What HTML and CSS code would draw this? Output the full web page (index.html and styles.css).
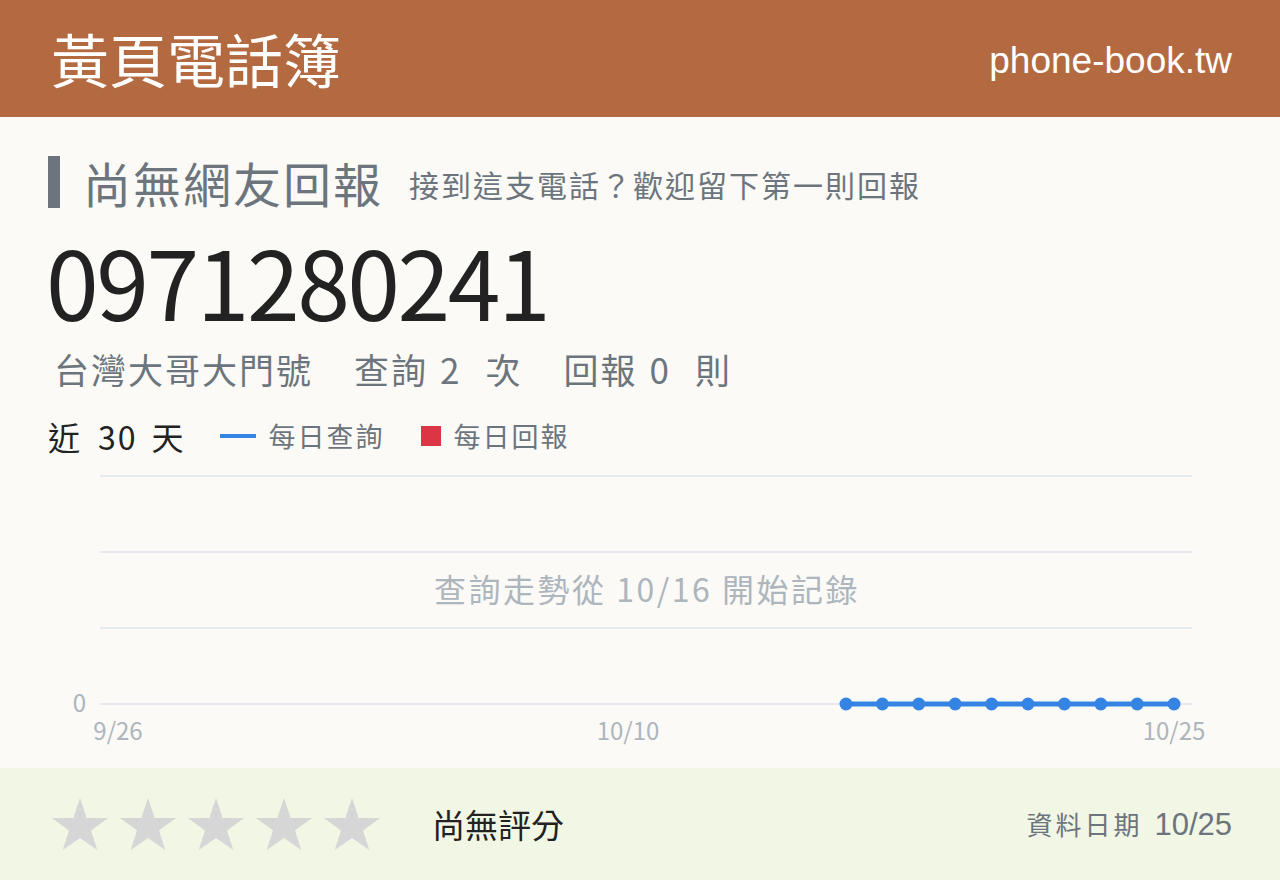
FILE: index.html
```html
<!DOCTYPE html>
<html lang="zh-Hant">
<head>
<meta charset="utf-8">
<title>0971280241 - 黃頁電話簿</title>
<link rel="stylesheet" href="styles.css">
</head>
<body>
<div class="page">
  <header class="topbar">
    <h1 class="brand">黃頁電話簿</h1>
    <span class="domain">phone-book.tw</span>
  </header>

  <main class="card">
    <div class="status">
      <span class="status-bar"></span>
      <h2 class="status-title">尚無網友回報</h2>
      <p class="status-hint">接到這支電話？歡迎留下第一則回報</p>
    </div>

    <div class="number">0971280241</div>

    <div class="meta">
      <span class="meta-item">台灣大哥大門號</span>
      <span class="meta-item">查詢<span class="count">2</span>次</span>
      <span class="meta-item">回報<span class="count">0</span>則</span>
    </div>

    <div class="legend">
      <span class="range">近<span class="days">30</span>天</span>
      <span class="key"><i class="swatch-line"></i>每日查詢</span>
      <span class="key"><i class="swatch-box"></i>每日回報</span>
    </div>

    <svg class="chart" viewBox="0 0 1184 290" width="1184" height="290">
      <g class="grid">
        <line x1="52" y1="11" x2="1144" y2="11"/>
        <line x1="52" y1="87" x2="1144" y2="87"/>
        <line x1="52" y1="163" x2="1144" y2="163"/>
        <line x1="52" y1="239" x2="1144" y2="239"/>
      </g>
      <text class="axis" x="38" y="247" text-anchor="end">0</text>
      <text class="axis" x="70" y="275" text-anchor="middle">9/26</text>
      <text class="axis" x="580" y="275" text-anchor="middle">10/10</text>
      <text class="axis" x="1126" y="275" text-anchor="middle">10/25</text>
      <text class="note" x="599" y="137" text-anchor="middle">查詢走勢從 10/16 開始記錄</text>
      <g class="series">
        <polyline points="798,239 1126,239"/>
        <circle cx="798" cy="239" r="6.5"/>
        <circle cx="834.4" cy="239" r="6.5"/>
        <circle cx="870.8" cy="239" r="6.5"/>
        <circle cx="907.2" cy="239" r="6.5"/>
        <circle cx="943.6" cy="239" r="6.5"/>
        <circle cx="980" cy="239" r="6.5"/>
        <circle cx="1016.4" cy="239" r="6.5"/>
        <circle cx="1052.8" cy="239" r="6.5"/>
        <circle cx="1089.2" cy="239" r="6.5"/>
        <circle cx="1126" cy="239" r="6.5"/>
      </g>
    </svg>
  </main>

  <footer class="rating">
    <div class="stars">
      <svg class="star" viewBox="0 0 56 52"><polygon points="28,0 34.6,20 56,20 39,32.5 45.3,52 28,40 10.7,52 17,32.5 0,20 21.4,20"/></svg>
      <svg class="star" viewBox="0 0 56 52"><polygon points="28,0 34.6,20 56,20 39,32.5 45.3,52 28,40 10.7,52 17,32.5 0,20 21.4,20"/></svg>
      <svg class="star" viewBox="0 0 56 52"><polygon points="28,0 34.6,20 56,20 39,32.5 45.3,52 28,40 10.7,52 17,32.5 0,20 21.4,20"/></svg>
      <svg class="star" viewBox="0 0 56 52"><polygon points="28,0 34.6,20 56,20 39,32.5 45.3,52 28,40 10.7,52 17,32.5 0,20 21.4,20"/></svg>
      <svg class="star" viewBox="0 0 56 52"><polygon points="28,0 34.6,20 56,20 39,32.5 45.3,52 28,40 10.7,52 17,32.5 0,20 21.4,20"/></svg>
    </div>
    <span class="rating-text">尚無評分</span>
    <span class="updated"><span class="updated-label">資料日期</span><span class="updated-date">10/25</span></span>
  </footer>
</div>
</body>
</html>
```

FILE: styles.css
```css
* {
  box-sizing: border-box;
}

html, body {
  margin: 0;
  padding: 0;
}

body {
  font-family: "Noto Sans CJK TC", "Noto Sans", sans-serif;
  background: #fbfaf6;
  color: #222;
}

.page {
  width: 1280px;
  height: 880px;
  display: flex;
  flex-direction: column;
  overflow: hidden;
}

/* top bar */
.topbar {
  height: 117px;
  flex: none;
  background: #b46a40;
  color: #fff;
  display: flex;
  align-items: center;
  justify-content: space-between;
  padding: 0 48px 0 51px;
}

.brand {
  margin: 0;
  font-weight: 400;
  font-size: 58px;
  line-height: 1;
  position: relative;
  top: -1px;
}

.domain {
  font-family: "Liberation Sans", Arial, sans-serif;
  font-size: 37px;
  line-height: 1;
  position: relative;
  top: 2px;
}

/* main card */
.card {
  flex: 1;
  padding: 39px 48px 0;
  background: #fbfaf6;
}

.status {
  display: flex;
  align-items: center;
  height: 52px;
}

.status-bar {
  width: 12px;
  height: 52px;
  background: #6c757d;
  margin-right: 23px;
}

.status-title {
  margin: 0 26px 0 0;
  font-size: 48px;
  font-weight: 400;
  line-height: 1;
  letter-spacing: 2px;
  color: #6c757d;
}

.status-hint {
  margin: 0;
  font-size: 30px;
  line-height: 1;
  letter-spacing: 2px;
  color: #6c757d;
  position: relative;
  top: 2px;
}

.number {
  margin-top: 10px;
  margin-left: -2px;
  font-size: 95px;
  line-height: 1.3;
  letter-spacing: -2.5px;
  color: #222;
}

.meta {
  margin-top: 6px;
  margin-left: 6px;
  display: flex;
  gap: 41px;
  font-size: 35px;
  line-height: 1.2;
  letter-spacing: 2px;
  color: #6c757d;
}

.count {
  margin: 0 24px 0 12px;
}

.legend {
  margin-top: 30px;
  display: flex;
  align-items: center;
  line-height: 1;
}

.range {
  color: #222;
  font-size: 32px;
  letter-spacing: 2px;
  margin-right: 34px;
}

.days {
  margin: 0 14px 0 16px;
}

.key {
  display: flex;
  align-items: center;
  color: #6c757d;
  font-size: 27px;
  letter-spacing: 2px;
  margin-right: 36px;
}

.swatch-line {
  display: inline-block;
  width: 36px;
  height: 4px;
  background: #3584e4;
  margin-right: 13px;
}

.swatch-box {
  display: inline-block;
  width: 20px;
  height: 20px;
  background: #dc3545;
  margin-right: 13px;
}

.chart {
  display: block;
  margin-top: 13px;
}

.chart .grid line {
  stroke: #e6e9ed;
  stroke-width: 2;
}

.chart .axis {
  font-family: "Noto Sans CJK TC", sans-serif;
  font-size: 24px;
  fill: #adb5bd;
}

.chart .note {
  font-family: "Noto Sans CJK TC", sans-serif;
  font-size: 32px;
  letter-spacing: 2.5px;
  fill: #adb5bd;
}

.chart .series polyline {
  fill: none;
  stroke: #3584e4;
  stroke-width: 5;
}

.chart .series circle {
  fill: #3584e4;
}

/* rating footer */
.rating {
  height: 112px;
  flex: none;
  background: #f2f6e4;
  display: flex;
  align-items: center;
  padding: 0 48px 0 52px;
}

.stars {
  display: flex;
  gap: 12px;
}

.star {
  width: 56px;
  height: 52px;
  display: block;
}

.star polygon {
  fill: #d6d6d6;
}

.rating-text {
  margin-left: 52px;
  font-size: 33px;
  color: #222;
}

.updated {
  margin-left: auto;
  color: #6c757d;
  display: flex;
  align-items: baseline;
}

.updated-label {
  font-size: 26px;
  letter-spacing: 3px;
  margin-right: 12px;
}

.updated-date {
  font-family: "Liberation Sans", Arial, sans-serif;
  font-size: 31px;
}
```
